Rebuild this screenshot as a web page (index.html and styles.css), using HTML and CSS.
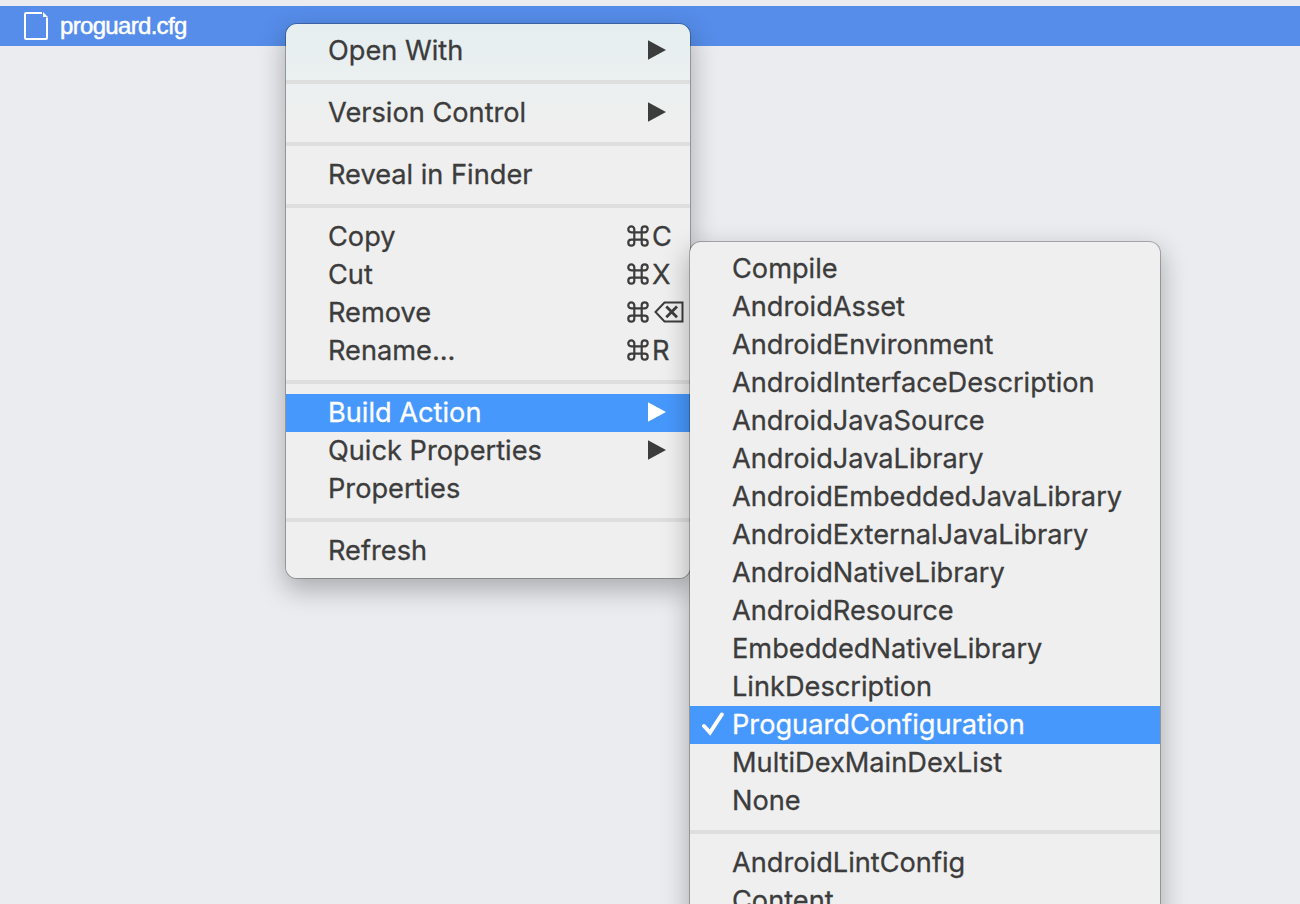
FILE: index.html
```html
<!DOCTYPE html>
<html lang="en">
<head>
<meta charset="utf-8">
<title>proguard.cfg</title>
<link rel="stylesheet" href="styles.css">
</head>
<body>
<svg class="defs" width="0" height="0">
  <symbol id="arrow" viewBox="0 0 18 20"><path d="M0 0.3 18 10 0 19.7Z" fill="currentColor"/></symbol>
  <symbol id="cmd" viewBox="0 0 22 22"><path d="M7.3 7.3H14.7V14.7H7.3ZM7.3 7.3H4.3A3 3 0 0 1 1.3 4.3A3 3 0 0 1 4.3 1.3A3 3 0 0 1 7.3 4.3ZM14.7 7.3V4.3A3 3 0 0 1 17.7 1.3A3 3 0 0 1 20.7 4.3A3 3 0 0 1 17.7 7.3ZM14.7 14.7H17.7A3 3 0 0 1 20.7 17.7A3 3 0 0 1 17.7 20.7A3 3 0 0 1 14.7 17.7ZM7.3 14.7V17.7A3 3 0 0 1 4.3 20.7A3 3 0 0 1 1.3 17.7A3 3 0 0 1 4.3 14.7Z" fill="none" stroke="currentColor" stroke-width="2.2"/></symbol>
</svg>
<div class="file-row">
  <svg class="file-icon" width="24" height="28" viewBox="0 0 24 28"><path d="M18 1H2Q1 1 1 2V26Q1 27 2 27H22Q23 27 23 26V5.5" fill="none" stroke="#fff" stroke-width="2"/><path d="M19 0 24 5H19Z" fill="#fff"/></svg>
  <span class="file-name">proguard.cfg</span>
</div>

<div class="menu context">
  <div class="item"><span>Open With</span><svg class="arrow"><use href="#arrow"/></svg></div>
  <div class="sep"></div>
  <div class="item"><span>Version Control</span><svg class="arrow"><use href="#arrow"/></svg></div>
  <div class="sep"></div>
  <div class="item"><span>Reveal in Finder</span></div>
  <div class="sep"></div>
  <div class="item"><span>Copy</span><span class="keys"><svg class="cmd"><use href="#cmd"/></svg><span>C</span></span></div>
  <div class="item"><span>Cut</span><span class="keys"><svg class="cmd"><use href="#cmd"/></svg><span>X</span></span></div>
  <div class="item"><span>Remove</span><span class="keys"><svg class="cmd"><use href="#cmd"/></svg><svg class="del" width="30" height="22" viewBox="0 0 30 22"><path d="M1.5 11 10.5 1.5H28.5V20.5H10.5Z" fill="none" stroke="currentColor" stroke-width="2"/><path d="M12.3 5.5 23 16.2M23 5.5 12.3 16.2" stroke="currentColor" stroke-width="2.8"/></svg></span></div>
  <div class="item"><span>Rename...</span><span class="keys"><svg class="cmd"><use href="#cmd"/></svg><span>R</span></span></div>
  <div class="sep"></div>
  <div class="item active"><span>Build Action</span><svg class="arrow"><use href="#arrow"/></svg></div>
  <div class="item"><span>Quick Properties</span><svg class="arrow"><use href="#arrow"/></svg></div>
  <div class="item"><span>Properties</span></div>
  <div class="sep"></div>
  <div class="item"><span>Refresh</span></div>
</div>

<div class="menu submenu">
  <div class="item"><span>Compile</span></div>
  <div class="item"><span>AndroidAsset</span></div>
  <div class="item"><span>AndroidEnvironment</span></div>
  <div class="item"><span>AndroidInterfaceDescription</span></div>
  <div class="item"><span>AndroidJavaSource</span></div>
  <div class="item"><span>AndroidJavaLibrary</span></div>
  <div class="item"><span>AndroidEmbeddedJavaLibrary</span></div>
  <div class="item"><span>AndroidExternalJavaLibrary</span></div>
  <div class="item"><span>AndroidNativeLibrary</span></div>
  <div class="item"><span>AndroidResource</span></div>
  <div class="item"><span>EmbeddedNativeLibrary</span></div>
  <div class="item"><span>LinkDescription</span></div>
  <div class="item active checked"><svg class="check" width="24" height="24" viewBox="0 0 24 24"><path d="M3 14 9 20.5 20.8 2.5" fill="none" stroke="currentColor" stroke-width="4" stroke-linecap="round"/></svg><span>ProguardConfiguration</span></div>
  <div class="item"><span>MultiDexMainDexList</span></div>
  <div class="item"><span>None</span></div>
  <div class="sep"></div>
  <div class="item"><span>AndroidLintConfig</span></div>
  <div class="item"><span>Content</span></div>
</div>
</body>
</html>
```
FILE: styles.css
```css
* { box-sizing: border-box; }
body {
  margin: 0;
  padding-top: 6px;
  width: 1300px;
  height: 904px;
  overflow: hidden;
  position: relative;
  background: #ebecf0;
  font-family: Inter, "Liberation Sans", sans-serif;
}
.defs { position: absolute; }
.file-row {
  display: flex;
  align-items: center;
  gap: 12px;
  height: 40px;
  padding-left: 24px;
  background: #568dea;
  color: #fff;
}
.file-name {
  font: 24px/38px "Liberation Sans", Arial, sans-serif;
  letter-spacing: -0.68px;
  -webkit-text-stroke: 0.5px #fff;
}
.menu {
  position: absolute;
  padding: 8px 0;
  border-radius: 11px;
  background: #efefef;
  color: #3c3c3c;
  box-shadow: 0 0 0 1px rgba(0, 0, 0, 0.26), 0 10px 26px 2px rgba(0, 0, 0, 0.27);
}
.context {
  left: 286px;
  top: 24px;
  width: 404px;
  background: linear-gradient(#e6eef0, #ebf0f0 55px, #efefef 100px);
}
.submenu { left: 690px; top: 242px; width: 470px; height: 700px; }
.item {
  display: flex;
  align-items: center;
  height: 38px;
  padding: 0 24px 0 42px;
  font-size: 27.2px;
  line-height: 38px;
  letter-spacing: 0;
  white-space: nowrap;
}
.item span { -webkit-text-stroke: 0.3px currentColor; }
.active { background: #4798fd; color: #fff; }
.sep { height: 4px; margin: 10px 0; background: #dedede; }
.arrow { width: 18px; height: 20px; margin: 0 0 2px auto; }
.keys {
  display: flex;
  align-items: center;
  width: 63px;
  margin: 0 -24px 0 auto;
}
.cmd { width: 22px; height: 22px; margin: 0 3px 2px 0; flex: none; }
.del { flex: none; margin: 0 0 2px 2px; }
.checked { padding-left: 11px; }
.check { margin: 0 7px 2px 0; }
```
